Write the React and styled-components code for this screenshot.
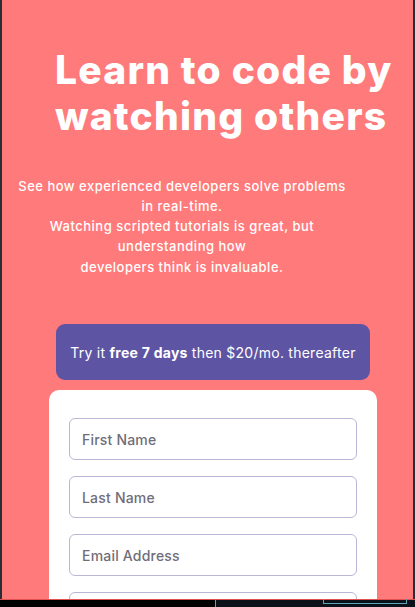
import React from "react";
import styled, { createGlobalStyle } from "styled-components";

const Global = createGlobalStyle`
  html, body { margin: 0; padding: 0; background: #2a2d33; }
  body { font-family: Inter, "Noto Sans", sans-serif; }
  * { box-sizing: border-box; }
`;

const Frame = styled.main`
  margin: 0 2px;
  min-height: 100vh;
  background: #ff7a7a;
  overflow: hidden;
  display: flex;
  flex-direction: column;
  padding-top: 47px;
`;

const Heading = styled.h1`
  margin: 0;
  padding-left: 53px;
  font-size: 39px;
  line-height: 46px;
  font-weight: 800;
  color: #ffffff;
  letter-spacing: 1.2px;
  white-space: nowrap;
`;

const Lead = styled.p`
  margin: 37px 51px 0 0;
  text-align: center;
  color: #fff;
  font-size: 13px;
  line-height: 20px;
  font-weight: 500;
  letter-spacing: 0.5px;
`;

const Line = styled.span`
  display: block;
  margin-top: ${(p) => p.$gap || 0}px;
`;

const Banner = styled.div`
  margin: 47px 43px 0 54px;
  height: 56px;
  border-radius: 9px;
  background: #5e54a4;
  color: #fff;
  display: flex;
  align-items: center;
  justify-content: center;
  font-size: 14px;
  font-weight: 400;
  letter-spacing: 0.25px;
  strong { font-weight: 700; }
`;

const Card = styled.form`
  margin: 10px 36px 0 47px;
  background: #fff;
  border-radius: 10px 10px 0 0;
  padding: 28px 20px 40px;
  display: flex;
  flex-direction: column;
  gap: 16px;
`;

const Input = styled.input`
  height: 42px;
  width: 100%;
  border: 1px solid #bab6d6;
  border-radius: 6px;
  padding: 0 12px;
  font-family: inherit;
  font-size: 14px;
  font-weight: 500;
  letter-spacing: 0.2px;
  color: #3d3b48;
  outline: none;
  &::placeholder { color: #6f6d7a; }
`;

const Taskbar = styled.div`
  position: fixed;
  left: 0;
  right: 0;
  bottom: 0;
  height: 8px;
  border-top: 1px solid #e2504f;
  display: flex;
`;

const TaskLeft = styled.div`
  width: 215px;
  background: #000;
`;

const TaskRight = styled.div`
  flex: 1;
  background: #0b1118;
  border-left: 1px solid #5fa3b8;
  position: relative;
`;

const TaskBox = styled.div`
  position: absolute;
  left: 107px;
  width: 84px;
  top: -1px;
  height: 5px;
  border: 1px solid #5fa3b8;
  border-top: none;
`;

export default function App() {
  return (
    <>
      <Global />
      <Frame>
        <Heading>
          Learn to code by
          <br />
          watching others
        </Heading>
        <Lead>
          <Line>See how experienced developers solve problems</Line>
          <Line>in real-time.</Line>
          <Line>Watching scripted tutorials is great, but</Line>
          <Line>understanding how</Line>
          <Line $gap={1}>developers think is invaluable.</Line>
        </Lead>
        <Banner>
          <span>
            Try it <strong>free 7 days</strong> then $20/mo. thereafter
          </span>
        </Banner>
        <Card onSubmit={(e) => e.preventDefault()}>
          <Input placeholder="First Name" />
          <Input placeholder="Last Name" />
          <Input placeholder="Email Address" />
          <Input placeholder="Password" type="password" />
        </Card>
      </Frame>
      <Taskbar>
        <TaskLeft />
        <TaskRight>
          <TaskBox />
        </TaskRight>
      </Taskbar>
    </>
  );
}
